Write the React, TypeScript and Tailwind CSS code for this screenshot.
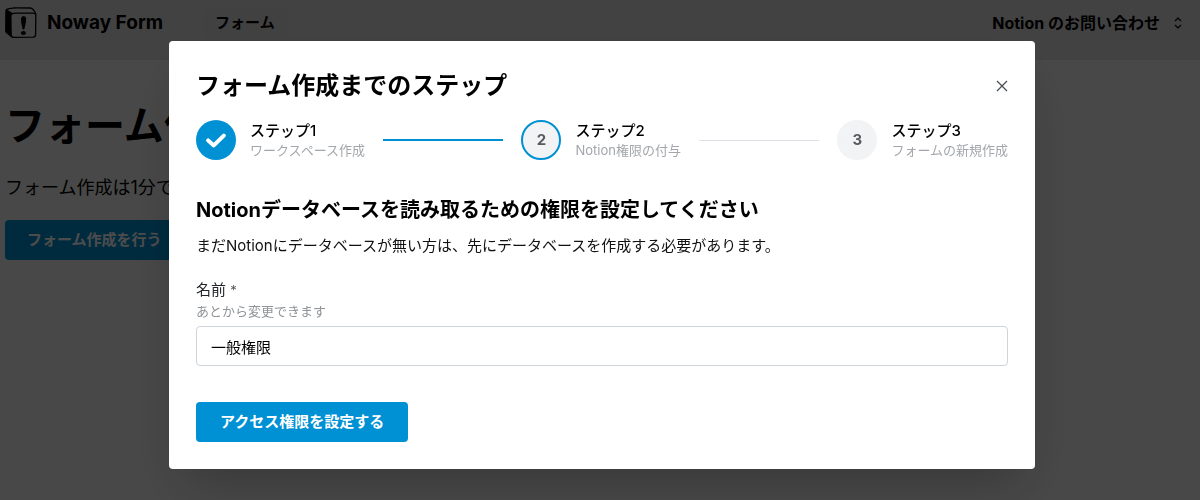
import { Fragment } from 'react';

type StepStatus = 'done' | 'active' | 'pending';

interface Step {
  readonly label: string;
  readonly description: string;
  readonly status: StepStatus;
}

const STEPS: readonly Step[] = [
  { label: 'ステップ1', description: 'ワークスペース作成', status: 'done' },
  { label: 'ステップ2', description: 'Notion権限の付与', status: 'active' },
  { label: 'ステップ3', description: 'フォームの新規作成', status: 'pending' },
];

function Logo() {
  return (
    <svg viewBox="0 0 32 32" className="h-8 w-8" aria-hidden="true">
      <path
        d="M1 3.6Q1.2 2.2 3 1.8L8 1Q9 .8 12 .8L25 1Q27 1 28 2.4L30 5.2Q30.8 6.2 30.8 8L30.6 27.5Q30.6 30 28 30.2L9 30.4Q7.4 30.4 6 29.2L1.6 25.6Q.8 25 .8 24Z"
        fill="none"
        stroke="currentColor"
        strokeWidth="1.3"
        strokeLinejoin="round"
      />
      <path d="M.8 3 7.4 6.8Q6.4 8 6.5 10L6.8 27Q6.9 29 8.2 30.4L6 29.6 1.4 25.8Q.6 25 .6 24Z" fill="currentColor" />
      <path d="M1.5 3 7.6 6.8Q8.4 6.2 10 6.2L28 6.2Q30 6.2 30.6 7.4" fill="none" stroke="currentColor" strokeWidth="1.3" strokeLinecap="round" />
      <path d="M16 11.6Q16.4 9 18.6 9 21 9 21.2 11.6 21.2 15 19.6 21.2 19.2 22.6 18.6 22.6 17.8 22.6 17.4 21.2 15.8 15 16 11.6Z" fill="currentColor" />
      <ellipse cx="18.4" cy="26" rx="2.6" ry="2" fill="currentColor" />
    </svg>
  );
}

function StepIcon({ status, number }: { readonly status: StepStatus; readonly number: number }) {
  if (status === 'done') {
    return (
      <span className="flex h-10 w-10 shrink-0 items-center justify-center rounded-full bg-[#0090d4] text-white">
        <svg viewBox="0 0 20 20" className="h-5 w-5" fill="none" stroke="currentColor" strokeWidth="4" strokeLinecap="round" strokeLinejoin="round" aria-hidden="true">
          <path d="M2.2 10.4 7.8 15.4 17.8 5.6" />
        </svg>
      </span>
    );
  }

  return (
    <span
      className={`flex h-10 w-10 shrink-0 items-center justify-center rounded-full border-2 bg-[#f1f3f5] text-[15px] font-bold text-[#565a5e] ${
        status === 'active' ? 'border-[#0090d4]' : 'border-[#f1f3f5]'
      }`}
    >
      {number}
    </span>
  );
}

function Stepper() {
  return (
    <ol className="mt-[15px] flex items-center">
      {STEPS.map((step, index) => (
        <Fragment key={step.label}>
          {index > 0 ? (
            <li
              aria-hidden="true"
              className={`mx-[18px] flex-1 ${
                STEPS[index - 1].status === 'done' ? 'h-0.5 bg-[#0090d4]' : 'h-px bg-[#dee2e6]'
              }`}
            />
          ) : null}
          <li className="flex items-center gap-[14px]" aria-current={step.status === 'active' ? 'step' : undefined}>
            <StepIcon status={step.status} number={index + 1} />
            <div>
              <p className="text-[15px] leading-5 font-medium text-black">{step.label}</p>
              <p className="text-[13px] leading-[18px] text-[#a3a7ab]">{step.description}</p>
            </div>
          </li>
        </Fragment>
      ))}
    </ol>
  );
}

function Header() {
  return (
    <header className="flex h-[60px] items-start justify-between bg-[#dedede] pt-[7px] pr-4 pl-[5px]">
      <div className="flex items-center">
        <a href="#" className="flex items-center gap-[10px]">
          <Logo />
          <span className="text-[19px] font-bold">Noway Form</span>
        </a>
        <a href="#" className="ml-10 rounded bg-[#d9dbdd] px-3 py-1 text-[15px] leading-6 font-bold">
          フォーム
        </a>
      </div>
      <button type="button" className="flex h-8 items-center gap-3 text-base font-bold">
        Notion のお問い合わせ
        <svg viewBox="0 0 12 14" className="h-[14px] w-3" fill="none" stroke="currentColor" strokeWidth="1.2" aria-hidden="true">
          <path d="M3 5 6 2 9 5M3 9 6 12 9 9" />
        </svg>
      </button>
    </header>
  );
}

function SetupDialog() {
  return (
    <div className="fixed inset-0 flex items-start justify-center bg-black/70 pt-[41px] pl-1">
      <section
        role="dialog"
        aria-modal="true"
        aria-labelledby="dialog-title"
        className="w-full max-w-[866px] rounded bg-white px-[27px] pt-[26px] pb-[27px] shadow-2xl"
      >
        <div className="flex items-center justify-between">
          <h2 id="dialog-title" className="text-2xl leading-[38px] font-bold text-black">
            フォーム作成までのステップ
          </h2>
          <button type="button" aria-label="閉じる" className="-mr-1 p-1 text-[#495057]">
            <svg viewBox="0 0 12 12" className="h-3 w-3" fill="none" stroke="currentColor" strokeWidth="1.3" aria-hidden="true">
              <path d="M1 1 11 11M11 1 1 11" />
            </svg>
          </button>
        </div>

        <Stepper />

        <form>
          <h3 className="mt-9 text-xl leading-7 font-bold text-black">
            Notionデータベースを読み取るための権限を設定してください
          </h3>
          <p className="mt-[10px] text-[15px] leading-6 text-[#111]">
            まだNotionにデータベースが無い方は、先にデータベースを作成する必要があります。
          </p>

          <label htmlFor="permission-name" className="mt-5 block text-[15px] leading-6 text-[#212529]">
            名前{' '}
            <span aria-hidden="true" className="text-[13px] text-[#565a5e]">
              *
            </span>
          </label>
          <p id="permission-hint" className="text-[13px] leading-[18px] text-[#909498]">
            あとから変更できます
          </p>
          <input
            id="permission-name"
            type="text"
            required
            defaultValue="一般権限"
            aria-describedby="permission-hint"
            className="mt-1.5 block h-10 w-full rounded border border-[#ced4da] px-[14px] text-[15px] text-black"
          />

          <button
            type="button"
            className="mt-9 h-10 rounded bg-[#0090d4] px-6 text-[15px] font-bold text-white"
          >
            アクセス権限を設定する
          </button>
        </form>
      </section>
    </div>
  );
}

export default function App() {
  return (
    <div lang="ja" className="min-h-screen bg-[#f2f2f2] font-['Inter','Noto_Sans_CJK_JP',sans-serif] text-black">
      <Header />
      <main className="px-[5px] pt-9">
        <h1 className="text-[40px] leading-[60px] font-bold">フォーム作成</h1>
        <p className="mt-5 text-lg leading-6">フォーム作成は1分で完了します</p>
        <button type="button" className="mt-5 h-10 rounded bg-[#0090d4] px-[22px] text-[15px] font-bold text-white">
          フォーム作成を行う
        </button>
      </main>
      <SetupDialog />
    </div>
  );
}
